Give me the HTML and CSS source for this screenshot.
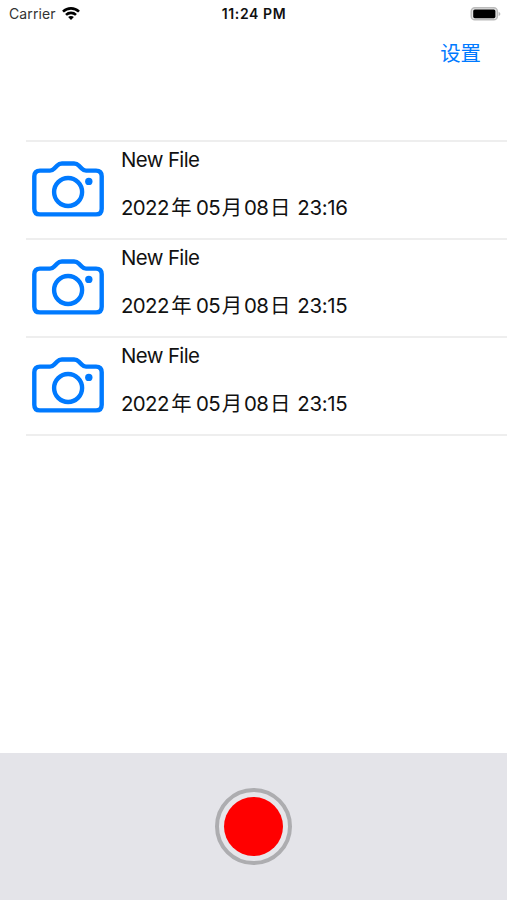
FILE: index.html
```
<!DOCTYPE html>
<html lang="zh">
<head>
    <meta charset="UTF-8">
    <meta name="viewport" content="width=device-width, initial-scale=1.0">
    <title>New File</title>
    <link rel="stylesheet" href="styles.css">
</head>
<body>
    <svg width="0" height="0" class="symbols">
        <symbol id="camera" viewBox="0 0 76 60">
            <g fill="none" stroke="currentColor" stroke-width="4.4" stroke-linejoin="round">
                <path d="M10 11.6H20C22 11.6 23 11 24.3 9.6L27.3 6.4C28.7 4.9 30 4.5 32 4.5H44C46 4.5 47.3 4.9 48.7 6.4L51.7 9.6C53 11 54 11.6 56 11.6H66Q71.7 11.6 71.7 17.3V49.7Q71.7 55.4 66 55.4H10Q4.3 55.4 4.3 49.7V17.3Q4.3 11.6 10 11.6Z"/>
                <circle cx="38.1" cy="33" r="14"/>
            </g>
            <circle cx="58.8" cy="22.4" r="3.7" fill="currentColor"/>
        </symbol>
    </svg>

    <div class="status-bar">
        <div class="carrier">
            <span>Carrier</span>
            <svg class="wifi" viewBox="0 0 18 13" width="18" height="13">
                <g fill="none" stroke="#000" stroke-width="2.6">
                    <path d="M1 4.6C5.5 .3 12.5 .3 17 4.6"/>
                    <path d="M4 7.9C6.8 5.2 11.2 5.2 14 7.9"/>
                </g>
                <path d="M9 13L6.1 10.1C7.7 8.5 10.3 8.5 11.9 10.1Z"/>
            </svg>
        </div>
        <div class="time">11:24 PM</div>
        <svg class="battery" viewBox="0 0 32 14" width="32" height="14">
            <rect x="2.2" y=".8" width="26.2" height="12" rx="3.6" fill="#e4e4e4" stroke="#bbb" stroke-width="1.4"/>
            <rect x="4.2" y="2.4" width="22.2" height="8.8" rx="1.6"/>
            <path d="M29.6 4.8Q31.4 5.5 31.4 6.9T29.6 9.1Z" fill="#bbb"/>
        </svg>
    </div>

    <div class="nav">
        <a href="#" class="settings">设置</a>
    </div>

    <ul class="file-list">
        <li class="file">
            <svg class="camera"><use href="#camera"/></svg>
            <div class="info">
                <div class="name">New File</div>
                <div class="date">2022<b class="year">年</b>05<b>月</b>08<b>日</b> <span>23:16</span></div>
            </div>
        </li>
        <li class="file">
            <svg class="camera"><use href="#camera"/></svg>
            <div class="info">
                <div class="name">New File</div>
                <div class="date">2022<b class="year">年</b>05<b>月</b>08<b>日</b> <span>23:15</span></div>
            </div>
        </li>
        <li class="file">
            <svg class="camera"><use href="#camera"/></svg>
            <div class="info">
                <div class="name">New File</div>
                <div class="date">2022<b class="year">年</b>05<b>月</b>08<b>日</b> <span>23:15</span></div>
            </div>
        </li>
    </ul>

    <div class="toolbar">
        <button class="record" aria-label="Record"><span></span></button>
    </div>
</body>
</html>
```
FILE: styles.css
```
* {
    box-sizing: border-box;
}
body {
    margin: 0;
    height: 900px;
    display: flex;
    flex-direction: column;
    overflow: hidden;
    background-color: #fff;
    color: #111;
    font-family: Inter, "Noto Sans CJK SC", sans-serif;
}
.symbols {
    display: none;
}

.status-bar {
    height: 27px;
    padding: 0 6px 0 9px;
    display: grid;
    grid-template-columns: 1fr auto 1fr;
    align-items: center;
}
.carrier {
    display: flex;
    align-items: center;
    gap: 6px;
    font-size: 14px;
    letter-spacing: 0.1px;
    color: #333;
}
.time {
    margin-right: 2px;
    font-size: 14px;
    font-weight: 600;
    letter-spacing: 0.6px;
}
.battery {
    justify-self: end;
}

.nav {
    height: 113px;
    padding: 12px 26px 0 0;
    text-align: right;
}
.settings {
    font-size: 20.4px;
    line-height: 30px;
    color: #007aff;
    text-decoration: none;
}

.file-list {
    flex: 1;
    margin: 0 0 0 26px;
    padding: 0;
    list-style: none;
}
.file {
    height: 98px;
    display: flex;
    border-top: 2px solid #eee;
}
.file:last-child {
    height: 100px;
    border-bottom: 2px solid #eee;
}
.camera {
    width: 76px;
    height: 60px;
    margin: 17px 15px 0 4px;
    color: #007aff;
}
.info {
    font-size: 20.4px;
    letter-spacing: -0.6px;
    white-space: nowrap;
}
.name {
    line-height: 24px;
    margin-top: 6px;
}
.date {
    line-height: 24px;
    margin-top: 24px;
}
.date b {
    display: inline-block;
    width: 24px;
    text-align: center;
    font-weight: 400;
    letter-spacing: 0;
    line-height: 24px;
}
.date .year {
    width: 25.5px;
    margin-right: 1.6px;
}
.date span {
    letter-spacing: -0.3px;
}

.toolbar {
    height: 147px;
    display: flex;
    justify-content: center;
    padding-top: 35px;
    background-color: #e4e4e9;
}
.record {
    width: 77px;
    height: 77px;
    display: flex;
    align-items: center;
    justify-content: center;
    padding: 0;
    border: 4px solid #adadb0;
    border-radius: 50%;
    background-color: #e6e6ea;
}
.record span {
    width: 59px;
    height: 59px;
    border-radius: 50%;
    background-color: #f00;
}
```
